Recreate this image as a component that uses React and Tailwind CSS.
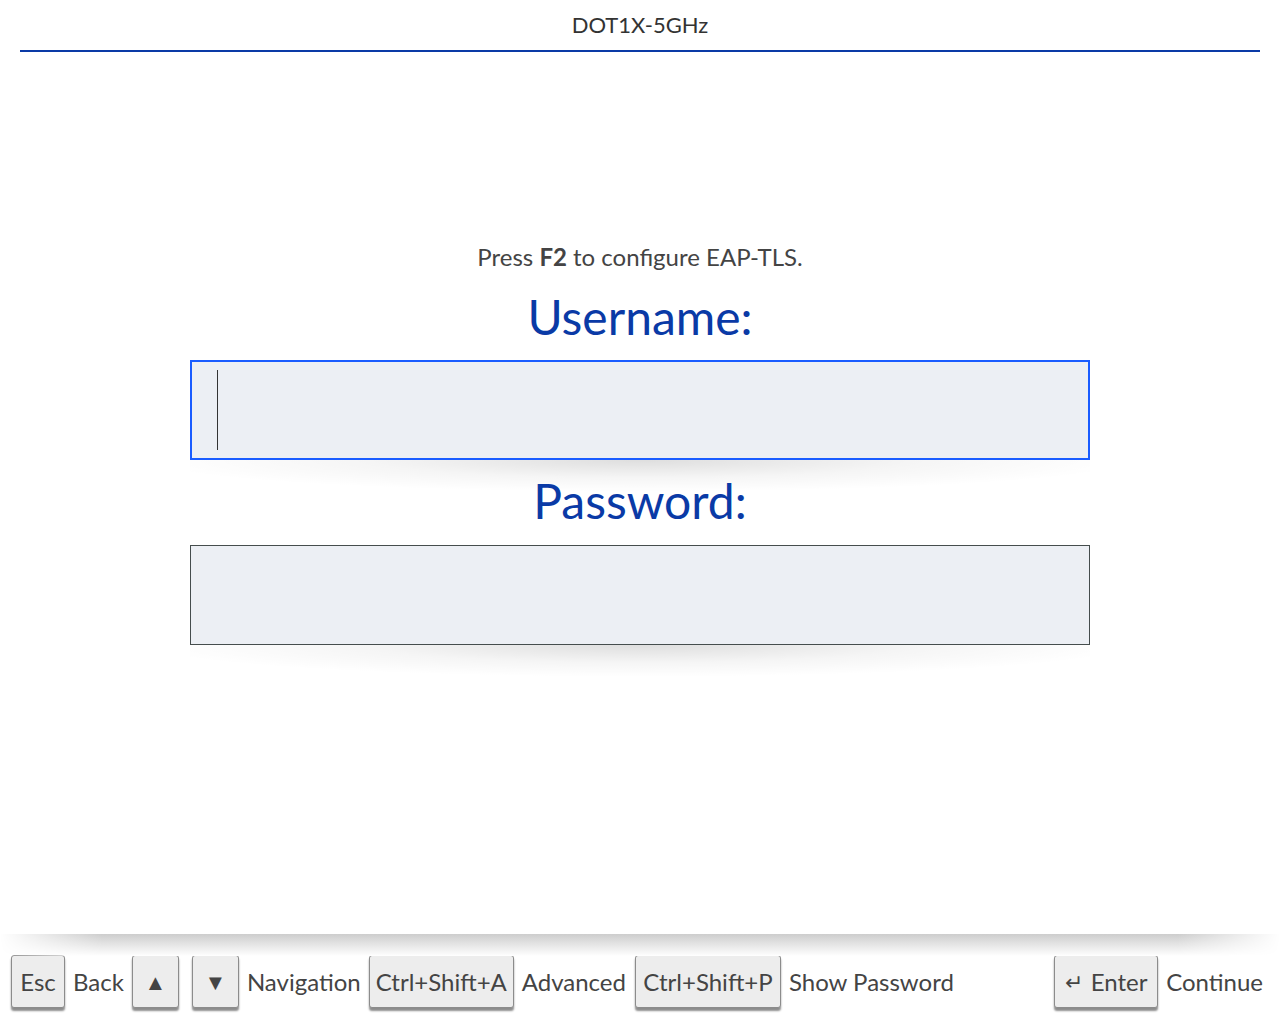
import React from 'react';

const font = { fontFamily: 'Lato, "Open Sans", sans-serif' };

const Key = ({ children, className = '' }) => (
  <span
    className={`inline-flex h-[53px] items-center justify-center rounded-[3px] border-[1.5px] border-[#8c8c8c] bg-[#ededed] px-[8px] text-[#444] shadow-[0_3px_2px_rgba(0,0,0,0.45)] ${className}`}
  >
    {children}
  </span>
);

const Field = ({ active }) => (
  <div className="w-[900px]">
    <div
      className={`relative h-[100px] bg-[#eceff4] ${
        active ? 'border-2 border-[#1a5cff]' : 'border border-[#454d4d]'
      }`}
    >
      {active && <span className="absolute left-[25px] top-[8px] h-[80px] w-px bg-[#333]" />}
    </div>
    <div className="h-[32px] bg-[radial-gradient(ellipse_55%_100%_at_50%_0%,rgba(0,0,0,0.13),rgba(0,0,0,0.04)_55%,transparent_100%)]" />
  </div>
);

export default function App() {
  return (
    <div className="flex h-[1024px] flex-col bg-white" style={font}>
      <header className="mx-5 border-b-2 border-[#0a3aa6] pb-[10px] pt-[10px] text-center text-[22px] leading-[30px] text-[#333]">
        DOT1X-5GHz
      </header>

      <main className="flex flex-1 flex-col items-center pt-[191px]">
        <p className="text-[24px] leading-[28px] text-[#444]">
          Press <b>F2</b> to configure EAP-TLS.
        </p>
        <h2 className="mt-[18px] text-[48px] leading-[56px] text-[#0a3aa6]">Username:</h2>
        <div className="mt-[15px]">
          <Field active />
        </div>
        <h2 className="mt-[-19px] text-[48px] leading-[56px] text-[#0a3aa6]">Password:</h2>
        <div className="mt-[16px]">
          <Field />
        </div>
      </main>

      <footer className="relative h-[90px]">
        <div className="absolute inset-x-0 top-0 h-[22px] bg-[linear-gradient(to_bottom,#cdcdcd,#ffffff)] [mask-image:linear-gradient(to_right,transparent,black_8%,black_92%,transparent)]" />
        <div className="flex items-center px-[11px] pt-[21px] text-[24px] leading-none text-[#444]">
          <Key className="w-[54px]">Esc</Key>
          <span className="ml-[8px]">Back</span>
          <Key className="ml-[8px] w-[47px] text-[22px]">▲</Key>
          <Key className="ml-[13px] w-[47px] text-[22px]">▼</Key>
          <span className="ml-[8px]">Navigation</span>
          <Key className="ml-[8px] w-[145px]">Ctrl+Shift+A</Key>
          <span className="ml-[8px]">Advanced</span>
          <Key className="ml-[9px] w-[146px]">Ctrl+Shift+P</Key>
          <span className="ml-[8px]">Show Password</span>
          <span className="flex-1" />
          <Key className="w-[104px]">
            <span className="mr-[8px] text-[22px]">↵</span>Enter
          </Key>
          <span className="ml-[8px] mr-[6px]">Continue</span>
        </div>
      </footer>
    </div>
  );
}
